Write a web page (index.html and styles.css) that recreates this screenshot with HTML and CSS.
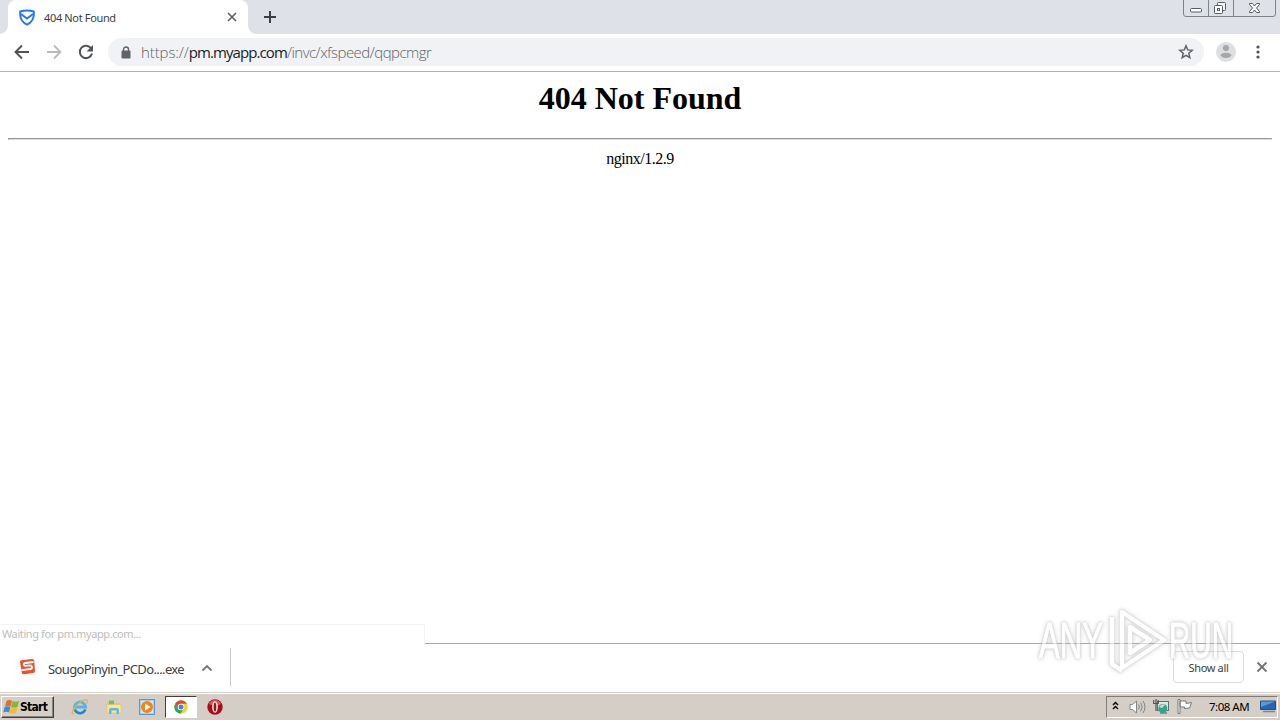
FILE: index.html
```html
<!DOCTYPE html>
<html lang="en">
<head>
    <meta charset="utf-8">
    <title>404 Not Found</title>
    <link rel="stylesheet" href="styles.css">
</head>
<body>
    <div class="desktop">
        <header class="tab-strip">
            <div class="tab">
                <svg class="favicon" width="16" height="17" viewBox="0 0 16 17" fill="none" stroke="#2878f0" stroke-width="2">
                    <path d="M1.2 2.5Q8 .3 14.8 2.5V6Q14.4 12.5 8 15.7Q1.6 12.5 1.2 6Z"/>
                    <path d="M2 5l6 4.5L14 5"/>
                </svg>
                <span class="tab-title">404 Not Found</span>
                <svg class="tab-close" width="10" height="10" viewBox="0 0 10 10" stroke="#5f6368" stroke-width="1.7"><path d="M1 1l8 8M9 1l-8 8"/></svg>
            </div>
            <svg class="new-tab" width="12" height="12" viewBox="0 0 12 12" stroke="#3c4043" stroke-width="2"><path d="M6 0v12M0 6h12"/></svg>
            <div class="window-controls">
                <svg width="93" height="17" viewBox="0 0 93 17" fill="none" stroke="#7d828b">
                    <path d="M.5 0v14q0 2.5 2.5 2.5h87q2.5 0 2.5-2.5V0M25.5 0v16M50.5 0v16"/>
                    <g stroke="#555b66">
                        <rect x="7.5" y="8.500" width="11" height="3.500" rx="1" fill="#fff"/>
                        <rect x="34.5" y="2.500" width="8" height="8" rx="1" fill="#f4f5f7"/>
                        <rect x="31.5" y="5.500" width="8" height="8" rx="1" fill="#fff"/>
                        <rect x="34.5" y="8.500" width="2" height="2"/>
                        <path d="M66.5 3.500h3l2 2.500 2-2.500h3v1L73.500 8l3 3.500v1h-3l-2-2.500-2 2.500h-3v-1l3-3.500-3-3.500z" fill="#fff"/>
                    </g>
                </svg>
            </div>
        </header>

        <div class="toolbar">
            <svg class="nav-icon" width="16" height="16" viewBox="0 0 16 16" fill="none" stroke="#505357" stroke-width="1.9"><path d="M15 8H2M8 1.500L1.500 8 8 14.500"/></svg>
            <svg class="nav-icon" width="16" height="16" viewBox="0 0 16 16" fill="none" stroke="#b8babd" stroke-width="1.8"><path d="M1 8h13M8 1.500L14.500 8 8 14.500"/></svg>
            <svg class="nav-icon" width="16" height="16" viewBox="0 0 16 16"><path d="M13.200 4.500A6.200 6.200 0 1 0 14 9.500" fill="none" stroke="#505357" stroke-width="2"/><path d="M15 1v6.500H8.500z" fill="#505357"/></svg>
            <div class="address-bar">
                <svg width="10" height="13" viewBox="0 0 10 13"><rect x=".5" y="4.5" width="9" height="8" rx="1" fill="#5f6368"/><path d="M2.500 5V3.500a2.500 2.500 0 0 1 5 0V5" fill="none" stroke="#5f6368" stroke-width="1.4"/></svg>
                <span class="url">https://<b>pm.myapp.com</b><span class="path">/invc/xfspeed/qqpcmgr</span></span>
                <svg class="star" width="16" height="16" viewBox="0 0 16 16" fill="none" stroke="#5f6368" stroke-width="1.5"><path d="M8 1.800l1.700 4.100 4.500.4-3.400 2.900 1 4.400L8 11.300l-3.800 2.300 1-4.400-3.400-2.900 4.500-.4z"/></svg>
            </div>
            <svg class="avatar" width="20" height="20" viewBox="0 0 20 20"><circle cx="10" cy="10" r="10" fill="#dedfe0"/><circle cx="10" cy="6" r="3.1" fill="#a5a7a9"/><path d="M4.500 13.500Q5 10.800 10 10.800t5.500 2.700Q13.500 16 10 16t-5.500-2.500z" fill="#a5a7a9"/></svg>
            <svg class="menu-dots" width="4" height="14" viewBox="0 0 4 14" fill="#505357"><circle cx="2" cy="2" r="1.6"/><circle cx="2" cy="7" r="1.6"/><circle cx="2" cy="12" r="1.6"/></svg>
        </div>

        <main class="page">
            <h1>404 Not Found</h1>
            <hr>
            <p>nginx/1.2.9</p>
            <div class="status-bubble">Waiting for pm.myapp.com...</div>
        </main>

        <div class="downloads">
            <div class="download-item">
                <svg class="sogou" width="18" height="18" viewBox="0 0 18 18" fill="none">
                    <path d="M1 4Q.8 2.600 2.500 2.300L13 1q2-.2 2.200 1.500L16 13q0 1.800-1.600 2L5 16.300q-2 .1-2.200-1.500z" fill="#e8532e"/>
                    <path d="M14.500 4L6.300 5q-1.700.3-1.500 1.700.1 1.300 1.800 1.200l4.500-.5q1.700 0 1.900 1.600.2 1.700-1.600 2L2.500 12.200" stroke="#fff" stroke-width="1.8"/>
                </svg>
                <span class="file-name">SougoPinyin_PCDo....exe</span>
                <svg class="chevron" width="12" height="8" viewBox="0 0 12 8" fill="none" stroke="#70757a" stroke-width="1.8"><path d="M1.500 6.500L6 2l4.500 4.500"/></svg>
            </div>
            <button class="show-all">Show all</button>
            <svg class="bar-close" width="12" height="12" viewBox="0 0 12 12" stroke="#70757a" stroke-width="1.9"><path d="M1.500 1.500l9 9M10.500 1.500l-9 9"/></svg>
        </div>

        <footer class="taskbar">
            <div class="start">
                <svg width="17" height="16" viewBox="0 0 17 16">
                    <path d="M3.500 2Q6 .3 9 1.800L7.500 7.500Q4.500 6 2 7.500z" fill="#e66a2c"/>
                    <path d="M9.500 2q3 1.500 6.500 0L14.500 8q-3 1.500-6.500 0z" fill="#82b73a"/>
                    <path d="M1.700 8Q4.500 6.600 7.500 8L6 13.500Q3 12 .3 13.500z" fill="#3c8bd5"/>
                    <path d="M8 8.500q3 1.400 6.500 0L13 14q-3 1.500-6.500 0z" fill="#f2bd2d"/>
                </svg>
                <span class="start-label">Start</span>
            </div>
            <div class="quick">
                <svg width="18" height="18" viewBox="0 0 18 18" fill="none">
                    <path d="M14.300 11.500A5.600 5.600 0 1 1 14.600 9H5" stroke="#56b3e8" stroke-width="2.8"/>
                    <path d="M14.300 11.500A5.600 5.600 0 0 1 4 12" stroke="#2581c7" stroke-width="2"/>
                    <path d="M3 15.500q-3 1-1.200-3C4 7.500 12 1 15.500 1.800q1.800.6.200 3.600" stroke="#dfb63f" stroke-width="1.3"/>
                </svg>
            </div>
            <div class="quick">
                <svg width="16" height="16" viewBox="0 0 16 16">
                    <path d="M1 2.500h5L7.500 4H15v9H1z" fill="#e9c75d"/><path d="M3 1.500h5v5H3z" fill="#70bd75"/>
                    <path d="M1 5.500h14V14H1z" fill="#f8e799" stroke="#dfc066" stroke-width=".6"/>
                    <path d="M3 15v-4q0-2 2-2h6q2 0 2 2v4h-2.500v-3.500h-5V15z" fill="#65b5dd"/>
                </svg>
            </div>
            <div class="quick">
                <svg width="16" height="16" viewBox="0 0 16 16"><rect x=".5" y=".5" width="15" height="15" fill="#a4cdf0" stroke="#5e97c9"/><rect x="2" y="2" width="12" height="12" fill="#d7eaf8"/><circle cx="8" cy="8" r="6" fill="#ef861d"/><path d="M6 4.500L11.500 8 6 11.500z" fill="#fff"/></svg>
            </div>
            <div class="quick running">
                <svg width="14" height="14" viewBox="0 0 14 14"><circle cx="7" cy="7" r="6.7" fill="#f9ce38"/><path d="M1.200 3.700A6.700 6.700 0 0 1 12.800 3.700H7L4 8.500z" fill="#df493b"/><path d="M1.200 3.700A6.700 6.700 0 0 0 6.500 13.700L9.500 9 4.500 8.500z" fill="#39a457"/><circle cx="7" cy="7" r="3.3" fill="#fff"/><circle cx="7" cy="7" r="2.5" fill="#4584de"/></svg>
            </div>
            <div class="quick">
                <svg width="16" height="16" viewBox="0 0 16 16"><circle cx="8" cy="8" r="7.7" fill="#a90e16"/><path d="M2 5a6.500 6.500 0 0 1 12 0q-6 3-12 0z" fill="#d95a55"/><ellipse cx="8" cy="8" rx="2.9" ry="5.7" fill="#f7eeee"/><ellipse cx="8" cy="8" rx="1.3" ry="4.5" fill="#a90e16"/></svg>
            </div>
            <div class="tray">
                <svg class="expand" width="7" height="9" viewBox="0 0 7 9" fill="none" stroke="#000" stroke-width="1.4"><path d="M1 4l2.500-2.500L6 4M1 8l2.500-2.500L6 8"/></svg>
                <svg class="sound" width="17" height="14" viewBox="0 0 17 14" fill="none" stroke="#858585"><path d="M1 4.500h2.500l4-3.500v12l-4-3.500H1z" fill="#fff"/><path d="M9.500 4.500q1.700 2.500 0 5M11.700 2.700q3 4.300 0 8.600M14 1q4 6 0 12"/></svg>
                <svg class="network" width="16" height="15" viewBox="0 0 16 15"><rect x="4.5" y="2.500" width="11" height="9" fill="#d5e9e8" stroke="#58727a"/><path d="M7 14h7" stroke="#555"/><circle cx="9.8" cy="9.500" r="4.500" fill="#30a68a"/><path d="M6 8q3-4 6-2l-3 3z" fill="#b8e5cf"/><path d="M.7 1v3.500h4.600V1M3 0v4M3 4.500V12" fill="none" stroke="#555" stroke-width="1.2"/></svg>
                <svg class="flag" width="16" height="15" viewBox="0 0 16 15" fill="#fff" stroke="#777"><path d="M1 .5h2v14H1zM3 2h6v2.500l5.500-1-2 5.500-5 .5V8H3z"/></svg>
                <time class="clock">7:08 AM</time>
                <svg class="show-desktop" width="17" height="13" viewBox="0 0 17 13"><path d="M.5 1h15v8.500H.5z" fill="#2565b4" stroke="#234d88"/><path d="M1 1.500h14L1 7z" fill="#5b98d8"/><path d="M3 11.500h12" stroke="#6889ad" stroke-width="1.5"/></svg>
            </div>
        </footer>

        <svg class="watermark" width="204" height="72" viewBox="0 0 204 72">
            <g class="mark-letters">
                <text x="3" y="51" textLength="64" lengthAdjust="spacingAndGlyphs">ANY</text>
                <text x="133" y="51" textLength="64" lengthAdjust="spacingAndGlyphs">RUN</text>
            </g>
            <g class="mark-play">
                <path d="M86 5v56l42-28z"/>
                <path d="M94 20v26l20-13z"/>
                <path d="M76 10v47l10 7"/>
            </g>
        </svg>
    </div>
</body>
</html>
```

FILE: styles.css
```css
body {
    margin: 0;
    overflow: hidden;
    font-family: "DejaVu Sans Condensed", "DejaVu Sans", sans-serif;
    background-color: #fff;
}

.desktop {
    position: relative;
    display: flex;
    flex-direction: column;
    width: 1280px;
    height: 720px;
    overflow: hidden;
}

svg {
    display: block;
    flex: none;
}

/* browser frame */
.tab-strip {
    display: flex;
    height: 34px;
    flex: none;
    padding-left: 8px;
    background-color: #dee1e7;
}

.tab {
    position: relative;
    display: flex;
    align-items: center;
    box-sizing: border-box;
    width: 240px;
    height: 34px;
    padding: 0 11px;
    border-radius: 8px 8px 0 0;
    background-color: #fff;
}

.tab::before,
.tab::after {
    content: "";
    position: absolute;
    bottom: 0;
    width: 8px;
    height: 8px;
}

.tab::before {
    left: -8px;
    background: radial-gradient(circle at 0 0, transparent 7.5px, #fff 8px);
}

.tab::after {
    right: -8px;
    background: radial-gradient(circle at 100% 0, transparent 7.5px, #fff 8px);
}

.tab-title {
    flex: 1;
    margin-left: 9px;
    font: 11px "Noto Sans", sans-serif;
    letter-spacing: -0.35px;
    color: #3c4043;
}

.new-tab {
    margin: 11px 0 0 16px;
}

.window-controls {
    margin-left: auto;
    margin-right: 4px;
}

.toolbar {
    display: flex;
    align-items: center;
    box-sizing: border-box;
    height: 38px;
    flex: none;
    padding: 0 20px 1px 14px;
    border-bottom: 1px solid #b5b5b5;
}

.nav-icon {
    margin-right: 16px;
}

.address-bar {
    display: flex;
    align-items: center;
    box-sizing: border-box;
    width: 1096px;
    height: 28px;
    margin-left: -2px;
    padding: 0 10px 0 13px;
    border-radius: 14px;
    background-color: #f0f2f5;
}

.url {
    margin-left: 10px;
    font: 300 15px/20px "Open Sans", "Noto Sans", sans-serif;
    letter-spacing: -0.1px;
    color: #5f6368;
    white-space: nowrap;
}

.url b {
    font-weight: 400;
    letter-spacing: -0.92px;
    color: #202124;
}

.path {
    letter-spacing: -0.54px;
}

.star {
    margin-left: auto;
}

.avatar {
    margin-left: 12px;
}

.menu-dots {
    margin-left: auto;
}

/* page */
.page {
    position: relative;
    flex: 1;
    padding: 0 8px;
    font-family: "Liberation Serif", serif;
    text-align: center;
    color: #000;
}

.page h1 {
    margin: 8px 0 21px;
    font-size: 32px;
    line-height: 37px;
}

.page hr {
    margin: 0 0 8px;
    border: 1px solid;
    border-color: #999 #c8c8c8 #ddd #999;
}

.page p {
    margin: 0;
    font-size: 16px;
    line-height: 21px;
    letter-spacing: -0.5px;
}

.status-bubble {
    position: absolute;
    left: 0;
    bottom: -2px;
    box-sizing: border-box;
    width: 425px;
    height: 21px;
    padding-left: 2px;
    border: solid #f3f3f3;
    border-width: 1px 1px 0 0;
    background-color: #fff;
    font: 11px/17px "Noto Sans", sans-serif;
    letter-spacing: -0.4px;
    text-align: left;
    color: #bdbdbd;
    z-index: 1;
}

.downloads {
    display: flex;
    align-items: center;
    box-sizing: border-box;
    height: 49px;
    flex: none;
    padding: 0 12px 2px 0;
    border-top: 1px solid #a6a6a6;
}

.download-item {
    display: flex;
    align-items: center;
    box-sizing: border-box;
    width: 231px;
    height: 38px;
    padding-left: 19px;
    border-right: 1px solid #c9c9c9;
}

.file-name {
    width: 136px;
    margin: 3px 0 0 11px;
    font: 13px "Noto Sans", sans-serif;
    letter-spacing: -0.62px;
    white-space: nowrap;
    color: #3c4043;
}

.chevron {
    margin: 2px 0 0 17px;
}

.show-all {
    box-sizing: border-box;
    width: 71px;
    height: 32px;
    margin-left: auto;
    padding: 0;
    border: 1px solid #dadce0;
    border-radius: 4px;
    background-color: #fff;
    font: 11px "Noto Sans", sans-serif;
    letter-spacing: -0.35px;
    color: #3c4043;
}

.bar-close {
    margin-left: 12px;
}

/* taskbar */
.taskbar {
    display: flex;
    align-items: center;
    box-sizing: border-box;
    height: 28px;
    flex: none;
    padding: 0 2px 0 1px;
    border-top: 1px solid #d5d0c8;
    background-color: #d5cec6;
    box-shadow: inset 0 1px #fff;
}

.start {
    display: flex;
    align-items: center;
    box-sizing: border-box;
    width: 53px;
    height: 22px;
    margin-right: 11px;
    padding-left: 1px;
    border: 1px solid;
    border-color: #fff #404040 #404040 #fff;
    box-shadow: inset -1px -1px #8a8580;
}

.start-label {
    font: bold 12px "DejaVu Sans Condensed", sans-serif;
    letter-spacing: -0.7px;
    color: #000;
}

.quick {
    display: flex;
    align-items: center;
    justify-content: center;
    box-sizing: border-box;
    width: 30px;
    height: 22px;
    margin-right: 3.7px;
}

.running {
    width: 32px;
    margin-left: -1px;
    margin-right: 2.7px;
    border: 1px solid;
    border-color: #404040 #fff #fff #404040;
    background-color: #fff;
}

.tray {
    display: flex;
    align-items: center;
    box-sizing: border-box;
    width: 172px;
    height: 22px;
    margin-left: auto;
    padding-left: 5px;
    border: 1px solid;
    border-color: #807b76 #fff #fff #807b76;
}

.expand {
    margin-bottom: 3px;
}

.sound {
    margin-left: 10px;
}

.network {
    margin-left: 7px;
}

.flag {
    margin-left: 8px;
}

.clock {
    width: 42px;
    margin-left: 16px;
    font: 11.5px "Noto Sans", sans-serif;
    letter-spacing: -0.5px;
    white-space: nowrap;
    color: #000;
}

.show-desktop {
    margin-left: 9px;
}

.watermark {
    position: absolute;
    left: 1036px;
    top: 607px;
    z-index: 2;
    overflow: visible;
    opacity: 0.6;
    pointer-events: none;
    filter: drop-shadow(0 0 1px #aaa) drop-shadow(0 0 2px #bbb);
}

.mark-letters {
    font: 50px "Liberation Sans", sans-serif;
    fill: #fff;
    stroke: #fff;
    stroke-width: 1;
}

.mark-play {
    fill: none;
    stroke: #fff;
    stroke-width: 4.5;
    stroke-linejoin: round;
}
```
